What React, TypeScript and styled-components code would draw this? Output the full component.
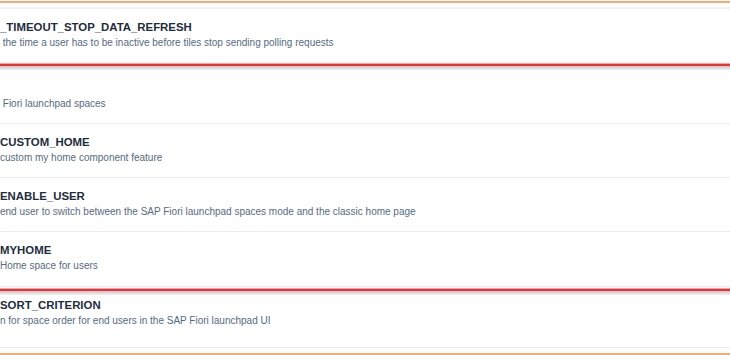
import React from "react";
import styled, { createGlobalStyle } from "styled-components";

const GlobalStyle = createGlobalStyle`
  html, body {
    margin: 0;
    padding: 0;
    background: #ffffff;
    overflow: hidden;
  }
  body {
    font-family: "Liberation Sans", Arial, sans-serif;
  }
`;

const Frame = styled.div`
  margin-top: 1px;
  width: 730px;
  border-top: 2px solid #f5aa74;
  border-bottom: 2px solid #f5aa74;
  background: #ffffff;
`;

const Stub = styled.div`
  height: 4px;
  border-bottom: 2px solid #f1f1f1;
`;

const Row = styled.div<{ $height?: number; $indicator?: boolean }>`
  position: relative;
  box-sizing: border-box;
  height: ${(p) => p.$height ?? 54}px;
  padding-top: 11px;
  display: flex;
  flex-direction: column;
  gap: 2px;
  border-bottom: ${(p) => (p.$indicator ? "none" : "1px solid #ececec")};
  white-space: nowrap;
  overflow: hidden;
`;

const Title = styled.div`
  height: 14px;
  line-height: 14px;
  font-size: 11.4px;
  font-weight: 700;
  color: #1d2d3e;
`;

const Desc = styled.div`
  height: 14px;
  line-height: 14px;
  font-size: 10px;
  color: #556b82;
`;

/* drop indicator shown while a row is dragged */
const DropLine = styled.div`
  height: 7px;
  background: linear-gradient(
    to bottom,
    #f7a3a6 0px,
    #f7a3a6 1px,
    #ee2f37 1px,
    #ee2f37 3px,
    #c6c6c6 3px,
    #dcdcdc 5px,
    #f2f2f2 7px
  );
`;

const OverlayLine = styled(DropLine)`
  position: absolute;
  left: 0;
  right: 0;
  top: 1px;
`;

const Tail = styled.div`
  height: 5px;
`;

interface Item {
  title: string;
  desc: string;
  height?: number;
  overlay?: boolean;
}

const items: Item[] = [
  { title: "", desc: "\u00a0Fiori launchpad spaces", height: 54 },
  { title: "CUSTOM_HOME", desc: "custom my home component feature" },
  {
    title: "ENABLE_USER",
    desc: "end user to switch between the SAP Fiori launchpad spaces mode and the classic home page",
  },
  { title: "MYHOME", desc: "Home space for users", height: 55 },
  {
    title: "SORT_CRITERION",
    desc: "n for space order for end users in the SAP Fiori launchpad UI",
    height: 61,
    overlay: true,
  },
];

const App: React.FC = () => {
  return (
    <>
      <GlobalStyle />
      <Frame>
        <Stub />
        <Row $height={54} $indicator>
          <Title>_TIMEOUT_STOP_DATA_REFRESH</Title>
          <Desc>
            {"\u00a0the time a user has to be inactive before tiles stop sending polling requests"}
          </Desc>
        </Row>
        <DropLine />
        {items.map((item, i) => (
          <Row key={i} $height={item.height}>
            {item.overlay && <OverlayLine />}
            <Title>{item.title}</Title>
            <Desc>{item.desc}</Desc>
          </Row>
        ))}
        <Tail />
      </Frame>
    </>
  );
};

export default App;
